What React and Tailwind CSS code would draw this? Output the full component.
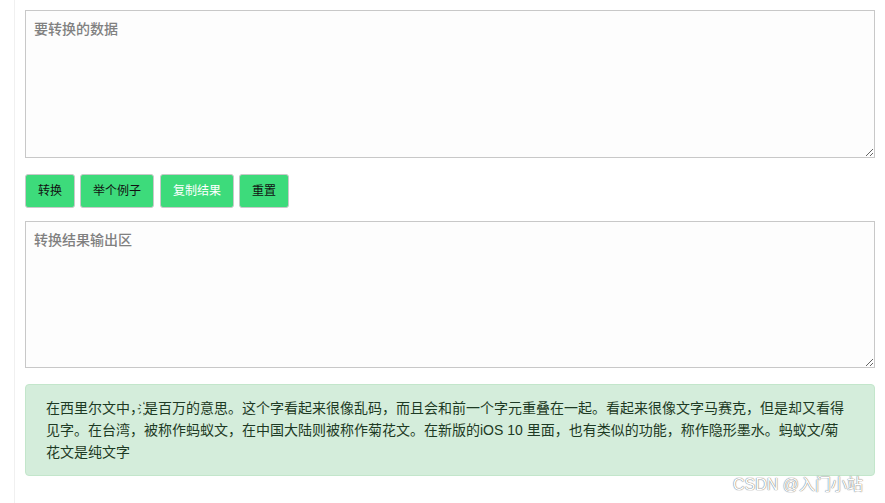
export default function App() {
  const font = { fontFamily: '"Liberation Sans", "Noto Sans CJK SC", sans-serif' };
  return (
    <div className="relative w-[885px] h-[503px] bg-white overflow-hidden" style={font}>
      <div className="ml-[14px] h-full border-l border-[#f0f0f0] pl-[10px] pr-[9px] pt-[10px]">
        <textarea
          className="block w-[850px] h-[148px] border border-[#c8c8c8] bg-[#fdfdfd] p-2 text-[14px] leading-5 text-[#333] placeholder:text-[#808080] font-medium outline-none"
          placeholder="要转换的数据"
        />
        <div className="flex gap-[5px] mt-[16px]">
          <button className="h-[34px] px-3 text-[12px] bg-[#3ddb7b] border border-[#c9c9c9] rounded-[3px] text-[#111]">转换</button>
          <button className="h-[34px] px-3 text-[12px] bg-[#3ddb7b] border border-[#c9c9c9] rounded-[3px] text-[#111]">举个例子</button>
          <button className="ml-px h-[34px] px-3 text-[12px] bg-[#3ddb7b] border border-[#c9c9c9] rounded-[3px] text-white">复制结果</button>
          <button className="h-[34px] px-3 text-[12px] bg-[#3ddb7b] border border-[#c9c9c9] rounded-[3px] text-[#111]">重置</button>
        </div>
        <textarea
          className="block mt-[13px] w-[850px] h-[147px] border border-[#c8c8c8] bg-[#fdfdfd] p-2 text-[14px] leading-5 text-[#333] placeholder:text-[#808080] font-medium outline-none"
          placeholder="转换结果输出区"
        />
        <div className="mt-[16px] w-[850px] rounded-[4px] border border-[#c3e6cb] bg-[#d4eddb] pl-[20px] pr-[24px] py-[12px] text-[14px] leading-[22px] text-[#1d3a24]">
          在西里尔文中，҉是百万的意思。这个字看起来很像乱码，而且会和前一个字元重叠在一起。看起来很像文字马赛克，但是却又看得见字。在台湾，被称作蚂蚁文，在中国大陆则被称作菊花文。在新版的iOS 10 里面，也有类似的功能，称作隐形墨水。蚂蚁文/菊花文是纯文字
        </div>
      </div>
      <div
        className="absolute left-[733px] top-[474px] text-[16px] leading-[22px] text-white"
        style={{ textShadow: '0 0 1px #777, 0 0 1px #777' }}
      >
        CSDN @入门小站
      </div>
    </div>
  );
}
